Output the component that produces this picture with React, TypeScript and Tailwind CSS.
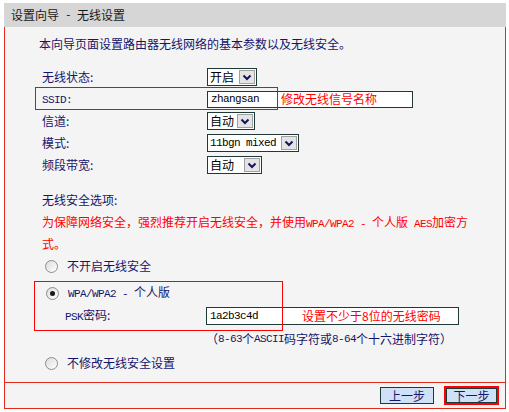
import React from 'react';

const cjk = "font-['Noto_Sans_CJK_SC',sans-serif] text-[12px]";
const mono = "font-['Liberation_Mono',monospace] text-[11px] tracking-[-0.6px]";
const navy = 'text-[#15156a]';

const Chevron = () => (
  <svg width="10" height="7" viewBox="0 0 10 7">
    <polyline points="1.5,1.5 5,5 8.5,1.5" fill="none" stroke="#14145e" strokeWidth="2" />
  </svg>
);

interface SelectProps {
  value: string;
  width: string;
  isMono?: boolean;
}

const Select: React.FC<SelectProps> = ({ value, width, isMono }) => (
  <div className={`flex h-[18px] items-center border border-[#1f3838] bg-white ${width}`}>
    <span className={`flex-1 pl-[2px] leading-none text-black ${isMono ? mono : cjk}`}>{value}</span>
    <span className="mr-[1px] flex h-[14px] w-[16px] items-center justify-center border border-[#a0a0a0] bg-[#e4e4e4]">
      <Chevron />
    </span>
  </div>
);

const Radio: React.FC<{ checked?: boolean }> = ({ checked }) => (
  <span className="flex h-[13px] w-[13px] items-center justify-center rounded-full border border-[#8c8c8c] bg-gradient-to-br from-[#dcdcdc] to-white">
    {checked && <span className="h-[5px] w-[5px] rounded-full bg-[#1a1a1a]" />}
  </span>
);

const FormRow: React.FC<{ label: React.ReactNode; children: React.ReactNode }> = ({ label, children }) => (
  <div className="flex h-[22px] items-center pl-[37px]">
    <div className={`w-[165px] ${navy} ${cjk}`}>{label}</div>
    {children}
  </div>
);

export default function App() {
  return (
    <div className={`h-[412px] w-[509px] bg-white pl-[4px] pt-[3px] ${cjk}`}>
      <div className="flex h-[24px] w-[502px] items-center bg-[#d6d6d6] pl-[7px] text-[#1a1a1a]">
        设置向导<span className={`${mono} whitespace-pre`}> - </span>无线设置
      </div>

      <div className="w-[502px] border-x border-b border-[#e42a1c]">
        <div className="h-[356px] border-b border-[#e42a1c] bg-[#f4f4f4] pt-[6px]">
          <div className={`flex h-[22px] items-center pl-[34px] ${navy}`}>
            本向导页面设置路由器无线网络的基本参数以及无线安全。
          </div>

          <div className="mt-[11px]">
            <FormRow label="无线状态:">
              <Select value="开启" width="w-[50px]" />
            </FormRow>

            <div className="relative">
              <FormRow label={<span className={mono}>SSID:</span>}>
                <div className="flex h-[17px] w-[206px] items-center border border-[#1f3838] bg-white">
                  <span className={`w-[73px] pl-[3px] text-black ${mono}`}>zhangsan</span>
                  <span className="text-[#ff0000]">修改无线信号名称</span>
                </div>
              </FormRow>
              <div className="absolute left-[30px] top-[-1px] h-[23px] w-[243px] border border-[#ff0000]" />
            </div>

            <FormRow label="信道:">
              <Select value="自动" width="w-[48px]" />
            </FormRow>
            <FormRow label="模式:">
              <Select value="11bgn mixed" width="w-[92px]" isMono />
            </FormRow>
            <FormRow label="频段带宽:">
              <Select value="自动" width="w-[55px]" />
            </FormRow>
          </div>

          <div className={`mt-[13px] flex h-[22px] items-center pl-[37px] ${navy}`}>无线安全选项:</div>
          <p className="mt-[1px] pl-[37px] leading-[19px] text-[#ff0000]">
            为保障网络安全，强烈推荐开启无线安全，并使用<span className={`${mono} whitespace-pre`}>WPA/WPA2 - </span>个人版
            <span className={`${mono} whitespace-pre`}> AES</span>加密方
            <br />
            式。
          </p>

          <div className={`mt-[2px] flex h-[22px] items-center gap-[9px] pl-[40px] ${navy}`}>
            <Radio />
            <span>不开启无线安全</span>
          </div>

          <div className="relative mt-[4px] h-[50px] pt-[1px]">
            <div className={`flex h-[22px] items-center gap-[9px] pl-[41px] ${navy}`}>
              <Radio checked />
              <span>
                <span className={`${mono} whitespace-pre`}>WPA/WPA2 - </span>个人版
              </span>
            </div>
            <div className="flex h-[24px] items-center pl-[60px]">
              <span className={`w-[141px] ${navy}`}>
                <span className={mono}>PSK</span>密码:
              </span>
              <div className="flex h-[18px] w-[253px] items-center border border-[#1f3838] bg-white">
                <span className={`w-[95px] pl-[3px] text-black ${mono}`}>1a2b3c4d</span>
                <span className="text-[#ff0000]">设置不少于8位的无线密码</span>
              </div>
            </div>
            <div className="absolute left-[29px] top-0 h-[50px] w-[249px] border border-[#ff0000]" />
          </div>

          <div className={`flex h-[16px] items-center pl-[201px] ${navy}`}>
            （<span className={mono}>8-63</span>个<span className={mono}>ASCII</span>码字符或
            <span className={mono}>8-64</span>个十六进制字符）
          </div>

          <div className={`mt-[5px] flex h-[22px] items-center gap-[9px] pl-[40px] ${navy}`}>
            <Radio />
            <span>不修改无线安全设置</span>
          </div>
        </div>

        <div className="flex h-[25px] items-center justify-end gap-[10px] bg-[#f4f4f4] pr-[6px]">
          <button className="flex h-[17px] w-[54px] items-center justify-center border border-[#1f3838] bg-[#cfe1f7] leading-none text-[#15156a]">
            上一步
          </button>
          <div className="border-2 border-[#ff0000]">
            <button className="flex h-[15px] w-[51px] items-center justify-center border border-[#1f3838] bg-[#cfe1f7] leading-none text-[#15156a]">
              下一步
            </button>
          </div>
        </div>
      </div>
    </div>
  );
}
